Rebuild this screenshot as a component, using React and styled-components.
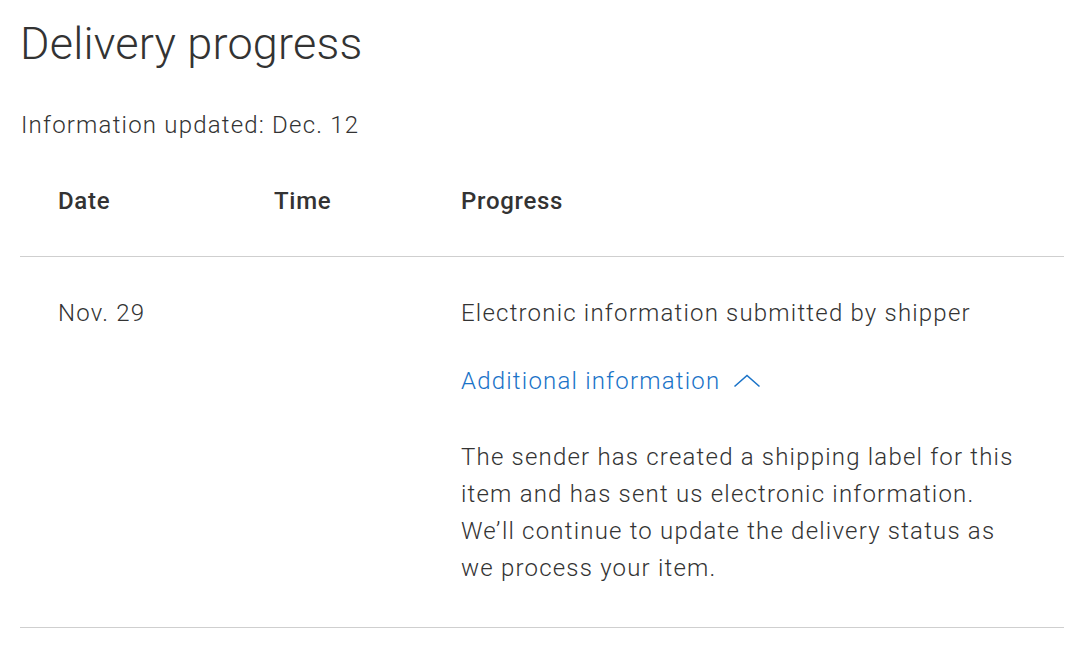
import React from "react";
import styled, { createGlobalStyle } from "styled-components";

const Global = createGlobalStyle`
  html, body { margin: 0; padding: 0; background: #fff; }
  body { font-family: Roboto, "Liberation Sans", Arial, sans-serif; color: #333; }
`;

const Page = styled.div`
  padding: 14px 16px 0 20px;
`;

const Title = styled.h1`
  margin: 0;
  font-size: 45px;
  font-weight: 300;
  line-height: 60px;
  color: #333;
  letter-spacing: 0.2px;
`;

const Updated = styled.p`
  margin: 37px 0 0 1px;
  font-size: 24px;
  font-weight: 300;
  line-height: 28px;
  letter-spacing: 1.2px;
  color: #333;
`;

const Table = styled.div`
  margin-top: 47px;
`;

const Row = styled.div`
  display: grid;
  grid-template-columns: 216px 187px 1fr;
  padding: ${(p) => p.$pad};
  border-bottom: 1.5px solid #cfcfcf;
  padding-left: 38px;
`;

const HeadCell = styled.div`
  font-size: 24px;
  font-weight: 500;
  line-height: 30px;
  letter-spacing: 0.7px;
  color: #333;
`;

const Cell = styled.div`
  font-size: 24px;
  font-weight: 300;
  line-height: 30px;
  letter-spacing: 1.2px;
  color: #333;
`;

const Progress = styled.div`
  display: flex;
  flex-direction: column;
`;

const Link = styled.a`
  display: inline-flex;
  align-items: center;
  gap: 13px;
  margin-top: 38px;
  font-size: 24px;
  font-weight: 300;
  line-height: 30px;
  letter-spacing: 1.2px;
  color: #1a73c8;
  text-decoration: none;
  cursor: pointer;
`;

const Detail = styled.p`
  margin: 43px 0 0;
  max-width: 560px;
  font-size: 24px;
  font-weight: 300;
  line-height: 37px;
  letter-spacing: 1.2px;
  color: #333;
`;

const Chevron = () => (
  <svg width="28" height="14" viewBox="0 0 28 14" fill="none">
    <path d="M1.5 12.5 L14 1.5 L26.5 12.5" stroke="#1a73c8" strokeWidth="1.6" />
  </svg>
);

export default function App() {
  return (
    <Page>
      <Global />
      <Title>Delivery progress</Title>
      <Updated>Information updated: Dec. 12</Updated>
      <Table>
        <Row $pad="0 0 40px">
          <HeadCell>Date</HeadCell>
          <HeadCell>Time</HeadCell>
          <HeadCell>Progress</HeadCell>
        </Row>
        <Row $pad="41px 0 40px">
          <Cell>Nov. 29</Cell>
          <Cell></Cell>
          <Progress>
            <Cell>Electronic information submitted by shipper</Cell>
            <Link>
              Additional information <Chevron />
            </Link>
            <Detail>
              The sender has created a shipping label for this item and has sent
              us electronic information. We’ll continue to update the delivery
              status as we process your item.
            </Detail>
          </Progress>
        </Row>
      </Table>
    </Page>
  );
}
